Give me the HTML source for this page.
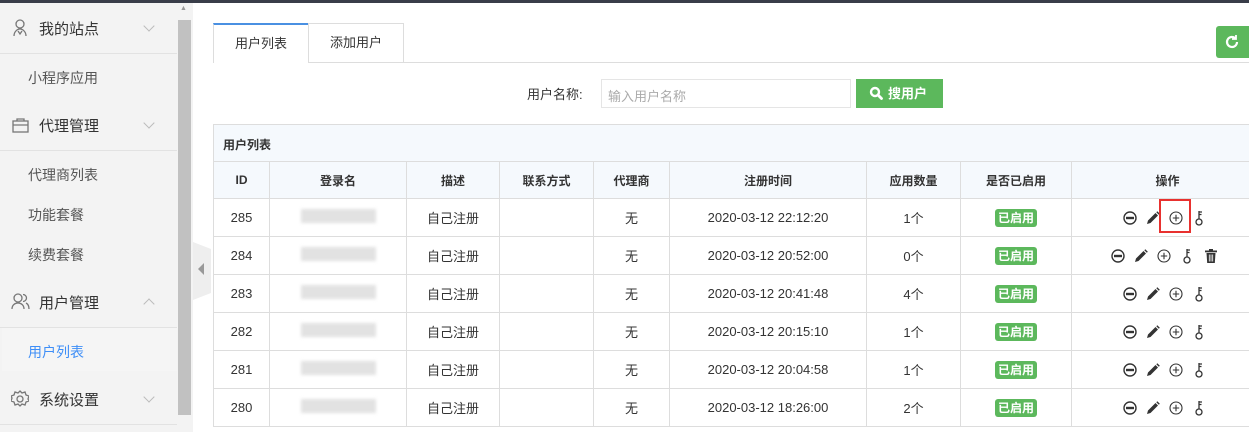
<!DOCTYPE html>
<html><head><meta charset="utf-8"><style>
*{margin:0;padding:0;box-sizing:border-box}
body{width:1249px;height:432px;overflow:hidden;background:#fff;font-family:"Liberation Sans","Noto Sans CJK SC",sans-serif;font-size:13px;color:#333;position:relative}
.a{position:absolute}
.top{left:0;top:0;width:1249px;height:3px;background:#393d49}
.side{left:0;top:3px;width:177px;height:429px;background:#f3f3f3}
.sb{left:177px;top:3px;width:16px;height:429px;background:#f3f3f3}
.thumb{left:178px;top:20px;width:13px;height:395px;background:#c1c1c1}
.g{font-size:15px;color:#333}
.sub{font-size:14px;color:#555}
.ln{left:0;width:177px;height:1px;background:#e2e2e2}
.chev{width:8px;height:8px;border-right:1.3px solid #bbb;border-bottom:1.3px solid #bbb;transform:rotate(45deg)}
.chev.up{transform:rotate(-135deg)}
table{border-collapse:collapse;table-layout:fixed}
td,th{border:1px solid #ddd;text-align:center;height:38px;font-size:13px;color:#333}
th{background:#f5f9fd;font-weight:bold;font-size:12px;height:37px}
.badge{display:inline-block;background:#5cb85c;color:#fff;font-weight:bold;font-size:12px;padding:1px 3px;border-radius:3px;line-height:16px}
.blur{display:inline-block;width:75px;height:14px;background:#e2e2e2;filter:blur(1.5px);margin-left:0}
.ic{display:inline-block;vertical-align:middle;margin:0 4.5px}
</style></head><body>
<div class="a top"></div>
<div class="a side"></div>
<div class="a sb"></div>
<div class="a thumb"></div>
<div class="a" style="left:180px;top:5px;font-size:7px;color:#999">▲</div>

<svg class="a" style="left:12px;top:19px" width="16" height="18" viewBox="0 0 16 18" fill="none" stroke="#777" stroke-width="1.3"><circle cx="8" cy="5" r="4"/><path d="M2 17c0-4 3-7 6-7s6 3 6 7M6 12l2 3 2-3"/></svg>
<div class="a g" style="left:39px;top:18px">我的站点</div><div class="a chev" style="left:145px;top:22px"></div>
<div class="a ln" style="top:53px"></div>
<div class="a sub" style="left:28px;top:68px">小程序应用</div>
<svg class="a" style="left:12px;top:116px" width="17" height="17" viewBox="0 0 17 17" fill="none" stroke="#777" stroke-width="1.3"><rect x="1" y="5" width="15" height="11"/><path d="M5 5V3h7v2M1 9h15"/></svg>
<div class="a g" style="left:39px;top:115px">代理管理</div><div class="a chev" style="left:145px;top:119px"></div>
<div class="a ln" style="top:150px"></div>
<div class="a sub" style="left:28px;top:165px">代理商列表</div>
<div class="a sub" style="left:28px;top:205px">功能套餐</div>
<div class="a sub" style="left:28px;top:245px">续费套餐</div>
<svg class="a" style="left:11px;top:293px" width="19" height="17" viewBox="0 0 19 17" fill="none" stroke="#777" stroke-width="1.3"><circle cx="7" cy="5" r="4"/><path d="M1 16c0-4 3-6 6-6s6 2 6 6M12 1.5a3.5 3.5 0 010 7M15 10c2 1 3 3 3 6"/></svg>
<div class="a g" style="left:39px;top:292px">用户管理</div><div class="a chev up" style="left:145px;top:300px"></div>
<div class="a ln" style="top:327px"></div>
<div class="a" style="left:2px;top:328px;width:175px;height:43px;background:#f5f5f5"></div>
<div class="a sub" style="left:28px;top:342px;color:#3e8ef7">用户列表</div>
<svg class="a" style="left:11px;top:390px" width="18" height="18" viewBox="0 0 18 18" fill="none" stroke="#777" stroke-width="1.3"><path d="M9 1l2 2 3-1 1 3 3 1-1 3 1 2-3 1-1 3-3-1-2 2-2-2-3 1-1-3-3-1 1-3-1-2 3-1 1-3 3 1z"/><circle cx="9" cy="9" r="3"/></svg>
<div class="a g" style="left:39px;top:389px">系统设置</div><div class="a chev" style="left:145px;top:393px"></div>
<div class="a ln" style="top:424px"></div>

<div class="a" style="left:193px;top:242px;width:18px;height:58px;background:#eee;clip-path:polygon(0 0,100% 12%,100% 88%,0 100%)"></div>
<div class="a" style="left:198px;top:263px;width:0;height:0;border-top:6px solid transparent;border-bottom:6px solid transparent;border-right:6px solid #999"></div>

<div class="a" style="left:213px;top:62px;width:1036px;height:1px;background:#ddd"></div>
<div class="a" style="left:213px;top:23px;width:96px;height:40px;background:#fff;border:1px solid #ddd;border-top:2px solid #4a90e2;border-bottom:none;text-align:center;line-height:38px;font-size:13px">用户列表</div>
<div class="a" style="left:308px;top:23px;width:96px;height:39px;border:1px solid #ddd;border-bottom:none;text-align:center;line-height:38px;font-size:13px">添加用户</div>
<div class="a" style="left:1216px;top:26px;width:40px;height:32px;background:#5cb85c;border-radius:3px"></div>
<svg class="a" style="left:1224px;top:34px" width="16" height="16" viewBox="0 0 16 16" fill="none" stroke="#fff" stroke-width="2.2"><path d="M13 8a5 5 0 11-1.5-3.6"/><path d="M12 1v4H8" stroke-width="1.8"/></svg>

<div class="a" style="left:527px;top:84px;font-size:13px">用户名称:</div>
<div class="a" style="left:601px;top:79px;width:250px;height:29px;border:1px solid #e5e5e5;color:#aaa;font-size:13px;padding:6px 6px">输入用户名称</div>
<div class="a" style="left:856px;top:79px;width:87px;height:29px;background:#5cb85c;color:#fff;font-size:13px;font-weight:bold;line-height:29px;padding-left:32px">搜用户</div>
<svg class="a" style="left:869px;top:86px" width="14" height="14" viewBox="0 0 14 14" fill="none" stroke="#fff"><circle cx="6" cy="6" r="4" stroke-width="2.4"/><path d="M9 9l3.5 3.5" stroke-width="2.8" stroke-linecap="round"/></svg>

<div class="a" style="left:213px;top:124px;width:1040px;height:38px;background:#f5f9fd;border:1px solid #ddd;font-weight:bold;font-size:12px;padding:11px 9px">用户列表</div>
<table class="a" style="left:213px;top:161px;width:1050px">
<colgroup><col style="width:56px"><col style="width:137px"><col style="width:93px"><col style="width:94px"><col style="width:76px"><col style="width:197px"><col style="width:94px"><col style="width:111px"><col style="width:192px"></colgroup>
<tr><th>ID</th><th>登录名</th><th>描述</th><th>联系方式</th><th>代理商</th><th>注册时间</th><th>应用数量</th><th>是否已启用</th><th>操作</th></tr>
<tr><td>285</td><td><span class="blur"></span></td><td>自己注册</td><td></td><td>无</td><td>2020-03-12 22:12:20</td><td>1个</td><td><span class="badge">已启用</span></td><td style="text-align:left;padding-left:46px">ICONS</td></tr>
<tr><td>284</td><td><span class="blur"></span></td><td>自己注册</td><td></td><td>无</td><td>2020-03-12 20:52:00</td><td>0个</td><td><span class="badge">已启用</span></td><td style="text-align:left;padding-left:34px">ICONS2</td></tr>
<tr><td>283</td><td><span class="blur"></span></td><td>自己注册</td><td></td><td>无</td><td>2020-03-12 20:41:48</td><td>4个</td><td><span class="badge">已启用</span></td><td style="text-align:left;padding-left:46px">ICONS</td></tr>
<tr><td>282</td><td><span class="blur"></span></td><td>自己注册</td><td></td><td>无</td><td>2020-03-12 20:15:10</td><td>1个</td><td><span class="badge">已启用</span></td><td style="text-align:left;padding-left:46px">ICONS</td></tr>
<tr><td>281</td><td><span class="blur"></span></td><td>自己注册</td><td></td><td>无</td><td>2020-03-12 20:04:58</td><td>1个</td><td><span class="badge">已启用</span></td><td style="text-align:left;padding-left:46px">ICONS</td></tr>
<tr><td>280</td><td><span class="blur"></span></td><td>自己注册</td><td></td><td>无</td><td>2020-03-12 18:26:00</td><td>2个</td><td><span class="badge">已启用</span></td><td style="text-align:left;padding-left:46px">ICONS</td></tr>
</table>
<div class="a" style="left:1159px;top:199px;width:32px;height:34px;border:2px solid #e8312f"></div>
<script>
var m='<svg class="ic" width="14" height="14" viewBox="0 0 14 14"><circle cx="7" cy="7" r="6" fill="none" stroke="#333" stroke-width="1.4"/><rect x="3" y="5.8" width="8" height="2.4" fill="#333"/></svg>';
var p='<svg class="ic" width="14" height="14" viewBox="0 0 14 14"><path d="M1 13l1-3.5 7.5-7.5 2.5 2.5L4.5 12z" fill="#333"/><path d="M10.3 1.2l1-1 2.5 2.5-1 1z" fill="#333"/></svg>';
var a='<svg class="ic" width="14" height="14" viewBox="0 0 14 14" fill="none" stroke="#333" stroke-width="1.1"><circle cx="7" cy="7" r="6"/><path d="M7 3.8v6.4M3.8 7h6.4"/></svg>';
var k='<svg class="ic" width="10" height="16" viewBox="0 0 10 16" fill="none" stroke="#333" stroke-width="1.3"><circle cx="4" cy="12" r="3"/><path d="M4 9V1M4 2h3M4 4.5h2.5"/></svg>';
var t='<svg class="ic" width="12" height="14" viewBox="0 0 12 14"><rect x="0" y="1.5" width="12" height="1.8" fill="#333"/><rect x="4" y="0" width="4" height="2" fill="#333"/><path d="M1.5 4h9l-.7 10H2.2z" fill="#333"/><path d="M4.3 5.5v7M6 5.5v7M7.7 5.5v7" stroke="#fff" stroke-width=".8"/></svg>';
document.querySelectorAll('td').forEach(function(d){if(d.textContent=='ICONS')d.innerHTML=m+p+a+'<span style="margin-left:3px"></span>'+k;if(d.textContent=='ICONS2')d.innerHTML=m+p+a+'<span style="margin-left:3px"></span>'+k+'<span style="margin-left:3px"></span>'+t;});
</script>
</body></html>
